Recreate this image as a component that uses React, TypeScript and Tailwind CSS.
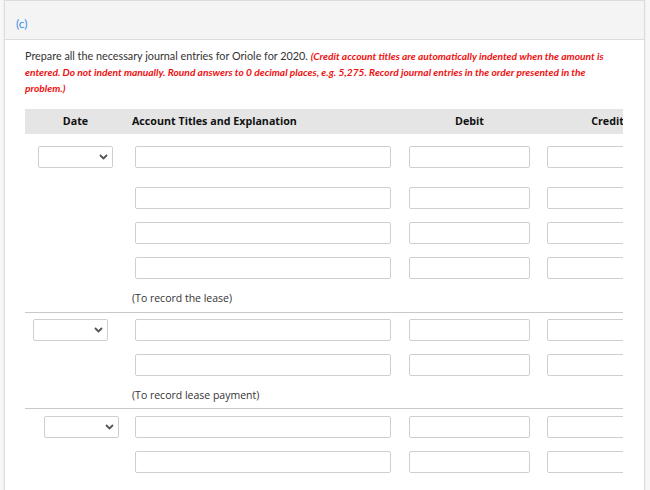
import React from "react"

const Chevron = () => (
  <svg width="9" height="6" viewBox="0 0 9 6" className="shrink-0">
    <path d="M1 1 L4.5 4.5 L8 1" fill="none" stroke="#555" strokeWidth="1.8" />
  </svg>
)

const DateSelect = ({ offset }: { offset: string }) => (
  <div className={`w-[110px] shrink-0 ${offset}`}>
    <div className="w-[75px] h-[22px] border border-[#cfcfcf] rounded-[2px] bg-white flex items-center justify-end pr-[4px]">
      <Chevron />
    </div>
  </div>
)

const Box = ({ w }: { w: string }) => (
  <div className={`${w} h-[22px] shrink-0 border border-[#cfcfcf] rounded-[2px] bg-white`} />
)

const Row = ({ select, className = "" }: { select?: string; className?: string }) => (
  <div className={`flex items-start ${className}`}>
    {select ? <DateSelect offset={select} /> : <div className="w-[110px] shrink-0" />}
    <Box w="w-[256px]" />
    <div className="w-[18px] shrink-0" />
    <Box w="w-[121px]" />
    <div className="w-[17px] shrink-0" />
    <Box w="w-[121px]" />
  </div>
)

const Note = ({ text }: { text: string }) => (
  <div className="pl-[107px] h-[16px] leading-[16px] text-[10.5px] text-[#333] font-['Open_Sans',sans-serif]">
    {text}
  </div>
)

export default function App() {
  return (
    <div className="w-[650px] h-[490px] bg-[#f7f7f7] overflow-hidden pl-[4px]">
      <div className="w-[641px] h-[500px] bg-white border-x border-t border-[#dcdcdc] shadow-[0_-1px_2px_rgba(0,0,0,0.08)]">
        {/* part header */}
        <div className="h-[39px] bg-[#f4f4f4] border-b border-[#dcdcdc] pl-[11px] pt-[9px]">
          <span className="text-[12px] text-[#3a8fe4] font-['Lato',sans-serif]">(c)</span>
        </div>

        <div className="px-[20px] pt-[8px]">
          <p className="text-[10.8px] leading-[16px] text-[#333] font-['Lato',sans-serif]">
            <span>Prepare all the necessary journal entries for Oriole for 2020.</span>{" "}
            <span className="text-[10.2px] text-[#ee1111] italic font-bold">
              (Credit account titles are automatically indented when the amount is entered. Do not indent manually.
              Round answers to 0 decimal places, e.g. 5,275. Record journal entries in the order presented in the
              problem.)
            </span>
          </p>

          {/* table */}
          <div className="mt-[13px] w-[598px] overflow-hidden">
            <div className="w-[700px]">
              <div className="h-[25px] bg-[#e5e5e5] flex items-center text-[10.7px] font-bold text-[#111] font-['Open_Sans',sans-serif] w-[700px]">
                <div className="w-[101px] shrink-0 text-center">Date</div>
                <div className="pl-[6px] w-[265px] shrink-0">Account Titles and Explanation</div>
                <div className="w-[121px] shrink-0 ml-[18px] text-center">Debit</div>
                <div className="w-[121px] shrink-0 ml-[17px] text-center">Credit</div>
              </div>

              {/* entry 1 */}
              <Row select="pl-[13px]" className="mt-[12px]" />
              <Row className="mt-[19px]" />
              <Row className="mt-[13px]" />
              <Row className="mt-[13px]" />
              <div className="mt-[11px]">
                <Note text="(To record the lease)" />
              </div>
              <div className="mt-[6px] w-[598px] border-t border-[#c8c8c8]" />

              {/* entry 2 */}
              <Row select="pl-[8px]" className="mt-[6px]" />
              <Row className="mt-[13px]" />
              <div className="mt-[11px]">
                <Note text="(To record lease payment)" />
              </div>
              <div className="mt-[5px] w-[598px] border-t border-[#c8c8c8]" />

              {/* entry 3 */}
              <Row select="pl-[19px]" className="mt-[7px]" />
              <Row className="mt-[13px]" />
            </div>
          </div>
        </div>
      </div>
    </div>
  )
}
